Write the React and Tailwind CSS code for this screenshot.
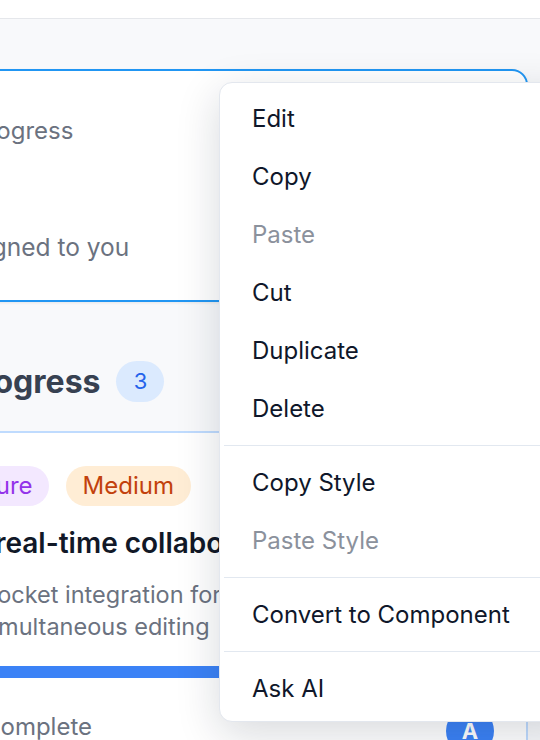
import React from "react";

const menuGroups = [
  [
    { label: "Edit" },
    { label: "Copy" },
    { label: "Paste", disabled: true },
    { label: "Cut" },
    { label: "Duplicate" },
    { label: "Delete" },
  ],
  [{ label: "Copy Style" }, { label: "Paste Style", disabled: true }],
  [{ label: "Convert to Component" }],
  [{ label: "Ask AI" }],
];

function ContextMenu() {
  return (
    <div className="absolute left-[219px] top-[82px] w-[360px] rounded-[13px] border border-[#e3e7ee] bg-white px-[4px] pt-[7px] pb-[3px] shadow-[0_12px_44px_rgba(15,23,42,0.16)]">
      {menuGroups.map((group, gi) => (
        <div key={gi}>
          {gi > 0 && <div className="mt-[7px] mb-[8px] h-px bg-[#e2e8f0]" />}
          {group.map((item) => (
            <div
              key={item.label}
              className={
                item.disabled
                  ? "flex h-[58px] items-center px-[28px] text-[24px] text-[#8b919c]"
                  : "flex h-[58px] items-center px-[28px] text-[24px] text-[#0f172a]"
              }
            >
              {item.label}
            </div>
          ))}
        </div>
      ))}
    </div>
  );
}

export default function App() {
  return (
    <div className="relative h-[740px] w-[540px] overflow-hidden bg-[#f8f9fb] font-['Inter',sans-serif]">
      <div className="h-[19px] border-b border-[#e5e7eb] bg-white" />

      <div className="ml-[-100px] w-[628px] pt-[50px]">
        {/* Summary card (selected) */}
        <div className="flex h-[233px] flex-col rounded-[16px] border-2 border-[#2196f3] bg-white pl-[43px] pt-[44px] shadow-[0_1px_3px_rgba(0,0,0,0.08)]">
          <div className="h-[32px] text-[24px] leading-[32px] text-[#6b7280]">In Progress</div>
          <div className="mt-[14px] h-[56px] text-[44px] font-bold leading-[56px] text-[#111827]">3</div>
          <div className="-ml-[2px] mt-[15px] h-[30px] text-[24.5px] leading-[30px] text-[#6b7280]">Assigned to you</div>
        </div>

        {/* Column header */}
        <div className="h-[131px] border-b-2 border-[#bfdbfe] pl-[24px] pt-[59px]">
          <div className="flex h-[41px] items-center gap-[16px]">
            <span className="text-[32px] font-bold text-[#374151]">In Progress</span>
            <span className="flex h-[41px] w-[48px] items-center justify-center rounded-full bg-[#dbeafe] text-[22px] text-[#2563eb]">
              3
            </span>
          </div>
        </div>

        {/* Task card */}
        <div className="border-r-2 border-[#bfdbfe] bg-white pl-[37px] pr-[32px] pt-[33px]">
          <div className="-ml-[6px] flex gap-[17px]">
            <span className="flex h-[40px] items-center rounded-full bg-[#f3e8ff] px-[16px] text-[24px] text-[#9333ea]">
              Feature
            </span>
            <span className="flex h-[40px] items-center rounded-full bg-[#ffedd5] px-[17px] text-[24px] text-[#c2410c]">
              Medium
            </span>
          </div>
          <div className="-ml-[4px] mt-[19px] whitespace-nowrap text-[28px] font-semibold leading-[36px] text-[#111827]">
            Add real-time collaboration
          </div>
          <div className="mt-[18px] text-[23.5px] leading-[32px] text-[#6b7280]">
            <div className="-ml-[5px] whitespace-nowrap">WebSocket integration for</div>
            <div className="ml-[43px] whitespace-nowrap">simultaneous editing</div>
          </div>
          <div className="mt-[23px] h-[12px] w-full rounded-full bg-[#e5e7eb]">
            <div className="h-[12px] w-[65%] rounded-full bg-[#3b82f6]" />
          </div>
          <div className="mt-[29px] flex items-center justify-between pb-[20px]">
            <span className="-ml-[10px] mb-[8px] text-[24px] text-[#6b7280]">65% complete</span>
            <span className="flex h-[48px] w-[48px] items-center justify-center rounded-full bg-[#3b82f6] text-[22px] font-bold text-white">
              A
            </span>
          </div>
        </div>
      </div>

      <ContextMenu />
    </div>
  );
}
